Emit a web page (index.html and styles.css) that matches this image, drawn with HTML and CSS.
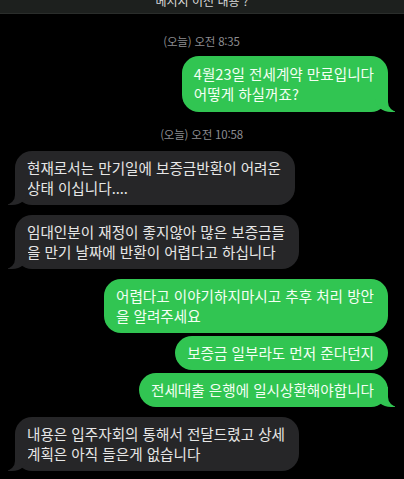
FILE: index.html
```html
<!DOCTYPE html>
<html lang="ko">
<head>
<meta charset="utf-8">
<link rel="stylesheet" href="styles.css">
</head>
<body>
<div class="topbar"><span class="topbar-text">메시지 이전 내용 ?</span></div>
<main class="chat">
  <div class="stamp stamp-first">(오늘) 오전 8:35</div>
  <div class="bubble sent tail first">4월23일 전세계약 만료입니다<br>어떻게 하실꺼죠?</div>
  <div class="stamp">(오늘) 오전 10:58</div>
  <div class="bubble recv tail first">현재로서는 만기일에 보증금반환이 어려운<br>상태 이십니다....</div>
  <div class="bubble recv tail gap">임대인분이 재정이 좋지않아 많은 보증금들<br>을 만기 날짜에 반환이 어렵다고 하십니다</div>
  <div class="bubble sent gap">어렵다고 이야기하지마시고 추후 처리 방안<br>을 알려주세요</div>
  <div class="bubble sent tight">보증금 일부라도 먼저 준다던지</div>
  <div class="bubble sent tail tight">전세대출 은행에 일시상환해야합니다</div>
  <div class="bubble recv tail gap">내용은 입주자회의 통해서 전달드렸고 상세<br>계획은 아직 들은게 없습니다</div>
</main>
</body>
</html>
```

FILE: styles.css
```css
html, body {
  margin: 0;
  padding: 0;
  background: #000;
}
body {
  width: 404px;
  height: 479px;
  overflow: hidden;
  font-family: "Noto Sans CJK KR", "Noto Sans", sans-serif;
}
.topbar {
  height: 13px;
  overflow: hidden;
  background: #1d201e;
  border-bottom: 1px solid #2a2d2b;
  text-align: center;
}
.topbar-text {
  display: block;
  margin-top: -6px;
  font-size: 12px;
  line-height: 14px;
  color: #d8d8d8;
}
.chat {
  display: flex;
  flex-direction: column;
  padding: 0 16px 0 15px;
}
.stamp {
  align-self: center;
  margin-top: 15px;
  font-size: 11.5px;
  line-height: 14px;
  color: #8c8c90;
  letter-spacing: -0.2px;
}
.stamp-first {
  margin-top: 20px;
}
.bubble {
  position: relative;
  white-space: nowrap;
  font-size: 14.6px;
  line-height: 20px;
  padding: 7px 14px 7px 12px;
  border-radius: 17px;
}
.first {
  margin-top: 10px;
}
.gap {
  margin-top: 10px;
}
.tight {
  margin-top: 3px;
}
.sent {
  align-self: flex-end;
  background: #31c552;
  color: #f4fff4;
}
.recv {
  align-self: flex-start;
  background: #262628;
  color: #e6e6e6;
}
.bubble.sent.first {
  margin-top: 8px;
  padding-top: 8px;
  padding-bottom: 8px;
}
.tail::before,
.tail::after {
  content: "";
  position: absolute;
  bottom: 0;
  height: 20px;
}
.sent.tail::before {
  right: -7px;
  width: 20px;
  background: #31c552;
  border-bottom-left-radius: 16px 14px;
}
.sent.tail::after {
  right: -26px;
  width: 26px;
  background: #000;
  border-bottom-left-radius: 10px;
}
.recv.tail::before {
  left: -7px;
  width: 20px;
  background: #262628;
  border-bottom-right-radius: 16px 14px;
}
.recv.tail::after {
  left: -26px;
  width: 26px;
  background: #000;
  border-bottom-right-radius: 10px;
}
```
